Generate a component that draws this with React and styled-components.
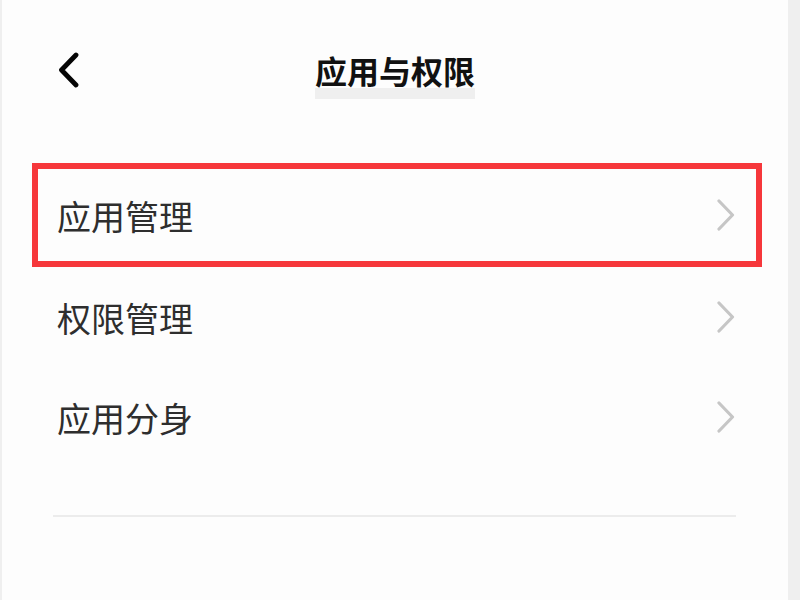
import React from "react";
import styled, { createGlobalStyle } from "styled-components";

const Global = createGlobalStyle`
  html, body { margin: 0; padding: 0; background: #efefef; }
  body { font-family: "Noto Sans CJK SC", "Noto Sans", sans-serif; }
`;

const Panel = styled.div`
  box-sizing: border-box;
  margin: 0 12px 0 2px;
  min-height: 600px;
  background: #fdfdfd;
  display: flex;
  flex-direction: column;
`;

const Header = styled.header`
  height: 144px;
  display: grid;
  grid-template-columns: 1fr auto 1fr;
  align-items: center;
`;

const BackButton = styled.button`
  justify-self: start;
  margin-left: 55px;
  padding: 0;
  border: 0;
  background: none;
  display: flex;
  align-items: center;
  cursor: pointer;
  margin-top: -4px;
`;

const Title = styled.h1`
  margin: 0;
  font-size: 32px;
  line-height: 32px;
  font-weight: 700;
  color: #111;
  padding: 8px 0 13px;
  background: linear-gradient(to bottom, transparent 0, transparent 42px, #efefef 42px, #efefef 53px);
`;

const List = styled.ul`
  list-style: none;
  margin: 19px 26px 0 30px;
  padding: 0;
`;

const Row = styled.li`
  box-sizing: border-box;
  display: flex;
  align-items: center;
  justify-content: space-between;
  height: ${(p) => (p.$selected ? "104px" : "100px")};
  border: ${(p) => (p.$selected ? "6px solid #f6373b" : "none")};
  padding: 0 ${(p) => (p.$selected ? "21px" : "27px")} 0 ${(p) => (p.$selected ? "19px" : "25px")};
`;

const Label = styled.span`
  font-size: 34px;
  line-height: 34px;
  color: #2e2e2e;
  font-weight: 400;
  margin-top: 2px;
`;

const Divider = styled.hr`
  margin: 48px 52px 0 51px;
  border: 0;
  height: 2px;
  background: #ececec;
`;

const BackIcon = () => (
  <svg width="22" height="36" viewBox="0 0 22 36">
    <polyline
      points="19,3 4.5,18 19,33"
      fill="none"
      stroke="#050505"
      strokeWidth="4.8"
      strokeLinecap="round"
      strokeLinejoin="round"
    />
  </svg>
);

const ChevronRight = () => (
  <svg width="18" height="32" viewBox="0 0 18 32">
    <polyline
      points="2,2 15.5,16 2,30"
      fill="none"
      stroke="#c6c6c6"
      strokeWidth="3.2"
      strokeLinecap="round"
      strokeLinejoin="round"
    />
  </svg>
);

const items = [
  { label: "应用管理", selected: true },
  { label: "权限管理" },
  { label: "应用分身" },
];

export default function App() {
  return (
    <>
      <Global />
      <Panel>
        <Header>
          <BackButton aria-label="返回">
            <BackIcon />
          </BackButton>
          <Title>应用与权限</Title>
          <span />
        </Header>
        <List>
          {items.map((it) => (
            <Row key={it.label} $selected={it.selected}>
              <Label>{it.label}</Label>
              <ChevronRight />
            </Row>
          ))}
        </List>
        <Divider />
      </Panel>
    </>
  );
}
